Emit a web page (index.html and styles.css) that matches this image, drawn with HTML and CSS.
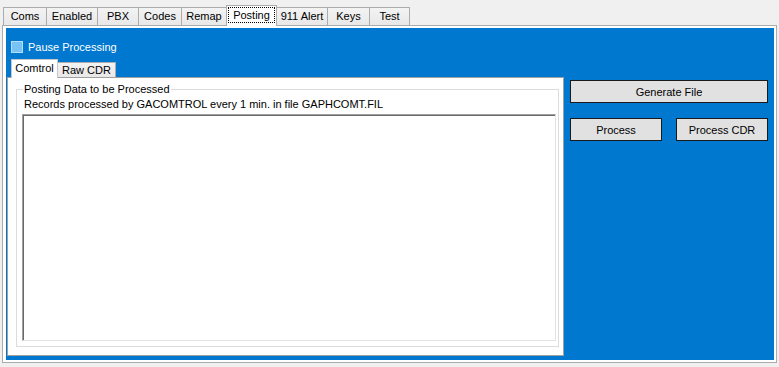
FILE: index.html
```html
<!DOCTYPE html>
<html lang="en">
<head>
  <meta charset="UTF-8">
  <title>Posting</title>
  <link rel="stylesheet" href="styles.css">
</head>
<body>
  <div class="window">
    <div class="tabstrip outer-tabs">
      <div class="tab">Coms</div>
      <div class="tab">Enabled</div>
      <div class="tab">PBX</div>
      <div class="tab">Codes</div>
      <div class="tab">Remap</div>
      <div class="tab active"><span class="focus">Posting</span></div>
      <div class="tab">911 Alert</div>
      <div class="tab">Keys</div>
      <div class="tab">Test</div>
    </div>
    <div class="tabpanel">
      <div class="page">
        <label class="check">
          <span class="box"></span>
          <span>Pause Processing</span>
        </label>

        <div class="page-body">
          <div class="inner">
            <div class="tabstrip inner-tabs">
              <div class="tab active">Comtrol</div>
              <div class="tab">Raw CDR</div>
            </div>
            <div class="inner-panel">
              <fieldset class="group">
                <legend>Posting Data to be Processed</legend>
                <div class="info">Records processed by GACOMTROL every 1 min. in file GAPHCOMT.FIL</div>
                <textarea class="log" readonly></textarea>
              </fieldset>
            </div>
          </div>

          <div class="actions">
            <button class="btn wide">Generate File</button>
            <div class="btn-row">
              <button class="btn">Process</button>
              <button class="btn">Process CDR</button>
            </div>
          </div>
        </div>
      </div>
    </div>
  </div>
</body>
</html>
```

FILE: styles.css
```css
body {
  margin: 0;
  background-color: #f0f0f0;
  font-family: "Liberation Sans", Arial, sans-serif;
  font-size: 11px;
  color: #000;
}

.window {
  padding: 5px 2px 0 2px;
}

/* tab strips */
.tabstrip {
  display: flex;
  align-items: flex-end;
}

.outer-tabs {
  height: 20px;
  padding-left: 1px;
}

.tab {
  box-sizing: border-box;
  border: 1px solid #acacac;
  border-bottom: none;
  margin-right: -1px;
  background: linear-gradient(#f3f3f3, #e8e8e8);
  text-align: center;
  white-space: nowrap;
}

.outer-tabs .tab {
  height: 18px;
  line-height: 17px;
}

.outer-tabs .tab:nth-child(1) { width: 44px; }
.outer-tabs .tab:nth-child(2) { width: 52px; }
.outer-tabs .tab:nth-child(3) { width: 42px; }
.outer-tabs .tab:nth-child(4) { width: 44px; }
.outer-tabs .tab:nth-child(5) { width: 46px; }
.outer-tabs .tab:nth-child(6) { width: 51px; }
.outer-tabs .tab:nth-child(7) { width: 52px; }
.outer-tabs .tab:nth-child(8) { width: 43px; }
.outer-tabs .tab:nth-child(9) { width: 41px; }

.tab.active {
  position: relative;
  z-index: 1;
  background: #fff;
  margin-bottom: -1px;
}

.outer-tabs .tab.active {
  height: 21px;
  padding: 1px 1px 0 1px;
}

.focus {
  display: block;
  height: 16px;
  line-height: 15px;
  box-sizing: border-box;
  border: 1px dotted #000;
}

.tabpanel {
  box-sizing: border-box;
  height: 338px;
  border: 1px solid #acacac;
  background-color: #fff;
  padding: 2px 2px 2px 3px;
}

/* blue page */
.page {
  height: 100%;
  background-color: #0078d0;
  padding-left: 1px;
  box-sizing: border-box;
}

.check {
  display: flex;
  align-items: center;
  gap: 5px;
  padding: 12px 0 0 4px;
  height: 13px;
  color: #fff;
}

.box {
  width: 10px;
  height: 10px;
  border: 1px solid #b5defc;
  background-color: #78c2f4;
}

.page-body {
  display: flex;
  margin-top: 6px;
  gap: 6px;
}

.inner {
  width: 557px;
}

.inner-tabs {
  height: 18px;
  padding-left: 4px;
}

.inner-tabs .tab {
  height: 15px;
  line-height: 15px;
  padding: 0 4px;
}

.inner-tabs .tab.active {
  height: 19px;
  line-height: 17px;
  width: 47px;
  padding: 0;
  border-color: #c8c8c8;
}

.inner-tabs .tab:nth-child(2) {
  width: 59px;
  padding: 0;
}

.inner-panel {
  box-sizing: border-box;
  height: 279px;
  border: 1px solid #a0a0a0;
  background-color: #fff;
  padding: 5px 4px 8px 8px;
  display: flex;
}

.group {
  flex: 1;
  display: flex;
  flex-direction: column;
  margin: 0;
  min-width: 0;
  border: 1px solid #dcdcdc;
  padding: 2px 2px 5px 5px;
}

.group legend {
  padding: 0 1px;
  margin-left: 1px;
  line-height: 13px;
}

.info {
  padding-left: 2px;
  line-height: 13px;
}

.log {
  flex: 1;
  margin: 3px 0 0 0;
  resize: none;
  border: 1px solid #e3e3e3;
  border-top-color: #a0a0a0;
  border-left-color: #a0a0a0;
  box-shadow: inset 1px 1px 0 #696969;
  background-color: #fff;
  padding: 0;
}

/* buttons */
.actions {
  width: 198px;
  padding-top: 21px;
  display: flex;
  flex-direction: column;
  gap: 15px;
}

.btn {
  box-sizing: border-box;
  height: 23px;
  width: 92px;
  border: 1px solid #1a1a1a;
  background-color: #e1e1e1;
  font-family: inherit;
  font-size: 11px;
  color: #000;
  padding: 0;
}

.btn.wide {
  width: 198px;
}

.btn-row {
  display: flex;
  justify-content: space-between;
}
```
